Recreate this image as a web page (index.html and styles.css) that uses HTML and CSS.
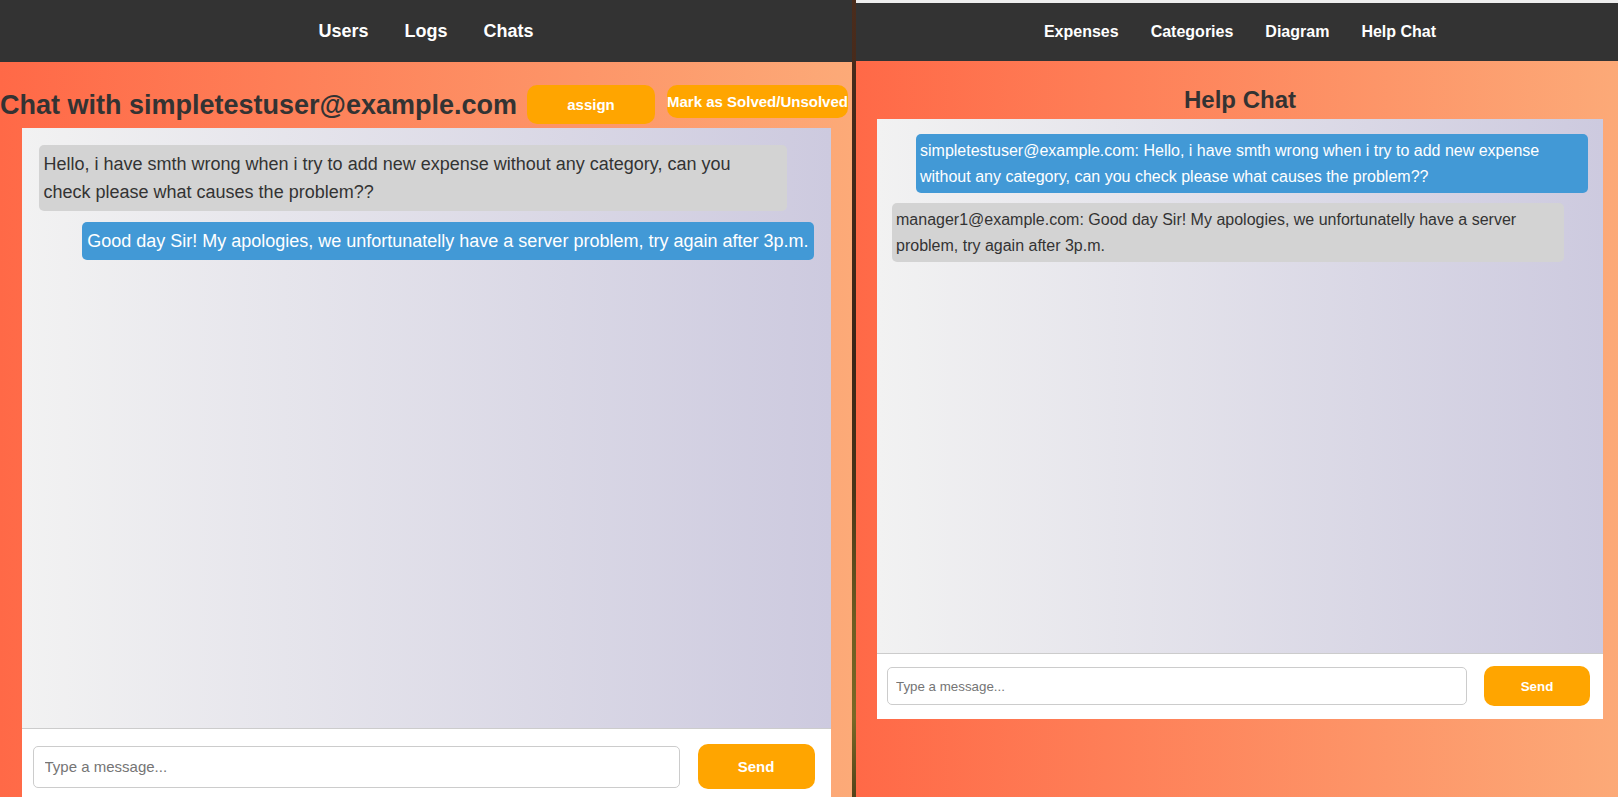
FILE: index.html
```html
<!DOCTYPE html>
<html lang="en">
<head>
<meta charset="utf-8">
<title>Chats</title>
<link rel="stylesheet" href="styles.css">
</head>
<body>
<div class="desktop">
  <section class="window window-admin">
    <nav class="navbar navbar-admin">
      <a class="nav-link">Users</a>
      <a class="nav-link">Logs</a>
      <a class="nav-link">Chats</a>
    </nav>
    <div class="chat-head">
      <h2 class="chat-title">Chat with simpletestuser@example.com</h2>
      <button class="btn btn-assign">assign</button>
      <button class="btn btn-mark">Mark as Solved/Unsolved</button>
    </div>
    <div class="chat-box chat-box-admin">
      <div class="messages">
        <div class="msg msg-other">Hello, i have smth wrong when i try to add new expense without any category, can you check please what causes the problem??</div>
        <div class="msg msg-own">Good day Sir! My apologies, we unfortunatelly have a server problem, try again after 3p.m.</div>
      </div>
      <div class="composer">
        <input class="composer-input" type="text" placeholder="Type a message...">
        <button class="btn btn-send">Send</button>
      </div>
    </div>
  </section>

  <div class="divider"></div>

  <section class="window window-user">
    <div class="top-strip"></div>
    <nav class="navbar navbar-user">
      <a class="nav-link">Expenses</a>
      <a class="nav-link">Categories</a>
      <a class="nav-link">Diagram</a>
      <a class="nav-link">Help Chat</a>
    </nav>
    <h2 class="help-title">Help Chat</h2>
    <div class="chat-box chat-box-user">
      <div class="messages">
        <div class="msg msg-own">simpletestuser@example.com: Hello, i have smth wrong when i try to add new expense without any category, can you check please what causes the problem??</div>
        <div class="msg msg-other">manager1@example.com: Good day Sir! My apologies, we unfortunatelly have a server problem, try again after 3p.m.</div>
      </div>
      <div class="composer">
        <input class="composer-input" type="text" placeholder="Type a message...">
        <button class="btn btn-send">Send</button>
      </div>
    </div>
  </section>
</div>
</body>
</html>
```

FILE: styles.css
```css
* {
  box-sizing: border-box;
}

html,
body {
  margin: 0;
  padding: 0;
}

body {
  font-family: "Liberation Sans", Arial, sans-serif;
  background: #3a2416;
  overflow: hidden;
}

.desktop {
  display: flex;
  height: 797px;
  width: 1618px;
  overflow: hidden;
}

.window {
  display: flex;
  flex-direction: column;
  flex: none;
  height: 797px;
  overflow: hidden;
  background: linear-gradient(to right, #ff6947, #fcaa78);
}

.window-admin {
  width: 852px;
  font-size: 18px;
}

.window-user {
  width: 768px;
  font-size: 16px;
}

.divider {
  flex: none;
  width: 4px;
  height: 797px;
  background: linear-gradient(to bottom, #4a2c1c 0%, #3c2417 45%, #4a3518 62%, #6e5c22 78%, #7a6826 90%, #54431a 100%);
}

.top-strip {
  height: 3px;
  background: #eeeeee;
  flex: none;
}

/* navigation */
.navbar {
  display: flex;
  justify-content: center;
  align-items: center;
  background: #333333;
  flex: none;
}

.navbar-admin {
  height: 62px;
  gap: 36px;
  font-size: 18px;
}

.navbar-user {
  height: 58px;
  gap: 32px;
  font-size: 16px;
}

.nav-link {
  color: #ffffff;
  font-weight: bold;
  text-decoration: none;
}

/* admin chat header */
.chat-head {
  display: flex;
  align-items: flex-start;
  margin-top: 23px;
  flex: none;
}

.chat-title {
  margin: 5px 0 0 0;
  font-size: 27px;
  line-height: 31px;
  font-weight: bold;
  color: #333333;
  white-space: nowrap;
}

.btn {
  border: none;
  background: #ffa500;
  color: #ffffff;
  font-family: "Liberation Sans", Arial, sans-serif;
  font-weight: bold;
  cursor: pointer;
  padding: 0;
  white-space: nowrap;
}

.btn-assign {
  width: 128px;
  height: 39px;
  margin-left: 10px;
  border-radius: 10px;
  font-size: 15px;
}

.btn-mark {
  width: 181px;
  height: 33px;
  margin-left: 12px;
  border-radius: 10px;
  font-size: 15px;
  overflow: visible;
}

.help-title {
  margin: 25px 0 5px 0;
  text-align: center;
  font-size: 24px;
  line-height: 28px;
  font-weight: bold;
  color: #333333;
  flex: none;
}

/* chat box */
.chat-box {
  display: flex;
  flex-direction: column;
  flex: none;
  margin-left: auto;
  margin-right: auto;
  background: linear-gradient(to right, #f2f2f2, #cdcadf);
}

.chat-box-admin {
  width: 809px;
  margin-top: 4px;
}

.chat-box-user {
  width: 726px;
}

.messages {
  display: flex;
  flex-direction: column;
  align-items: flex-start;
}

.chat-box-admin .messages {
  height: 600px;
  padding: 17px;
  gap: 11px;
}

.chat-box-user .messages {
  height: 534px;
  padding: 15px;
  gap: 10px;
}

.msg {
  border-radius: 5px;
}

.chat-box-admin .msg {
  font-size: 18px;
  line-height: 28px;
  padding: 5px;
  max-width: calc(100% - 27px);
}

.chat-box-user .msg {
  font-size: 16px;
  line-height: 25.6px;
  padding: 4px;
  max-width: calc(100% - 24px);
}

.msg-other {
  background: #d3d3d3;
  color: #333333;
  align-self: flex-start;
}

.msg-own {
  background: #4299d6;
  color: #ffffff;
  align-self: flex-end;
}

/* composer */
.composer {
  display: flex;
  align-items: center;
  background: #ffffff;
  border-top: 1px solid #cccccc;
}

.chat-box-admin .composer {
  padding: 15px 16px 15px 11px;
  gap: 18px;
}

.chat-box-user .composer {
  padding: 12px 13px 13px 10px;
  gap: 17px;
}

.composer-input {
  flex: 1;
  min-width: 0;
  border: 1px solid #cccccc;
  border-radius: 5px;
  background: #ffffff;
  font-family: "Liberation Sans", Arial, sans-serif;
  color: #333333;
  outline: none;
}

.composer-input::placeholder {
  color: #757575;
}

.chat-box-admin .composer-input {
  height: 42px;
  padding: 0 11px;
  font-size: 15px;
}

.chat-box-user .composer-input {
  height: 38px;
  padding: 0 8px;
  font-size: 13.33px;
}

.btn-send {
  flex: none;
  border-radius: 10px;
}

.chat-box-admin .btn-send {
  width: 117px;
  height: 45px;
  font-size: 15px;
}

.chat-box-user .btn-send {
  width: 106px;
  height: 40px;
  font-size: 13.33px;
}
```
